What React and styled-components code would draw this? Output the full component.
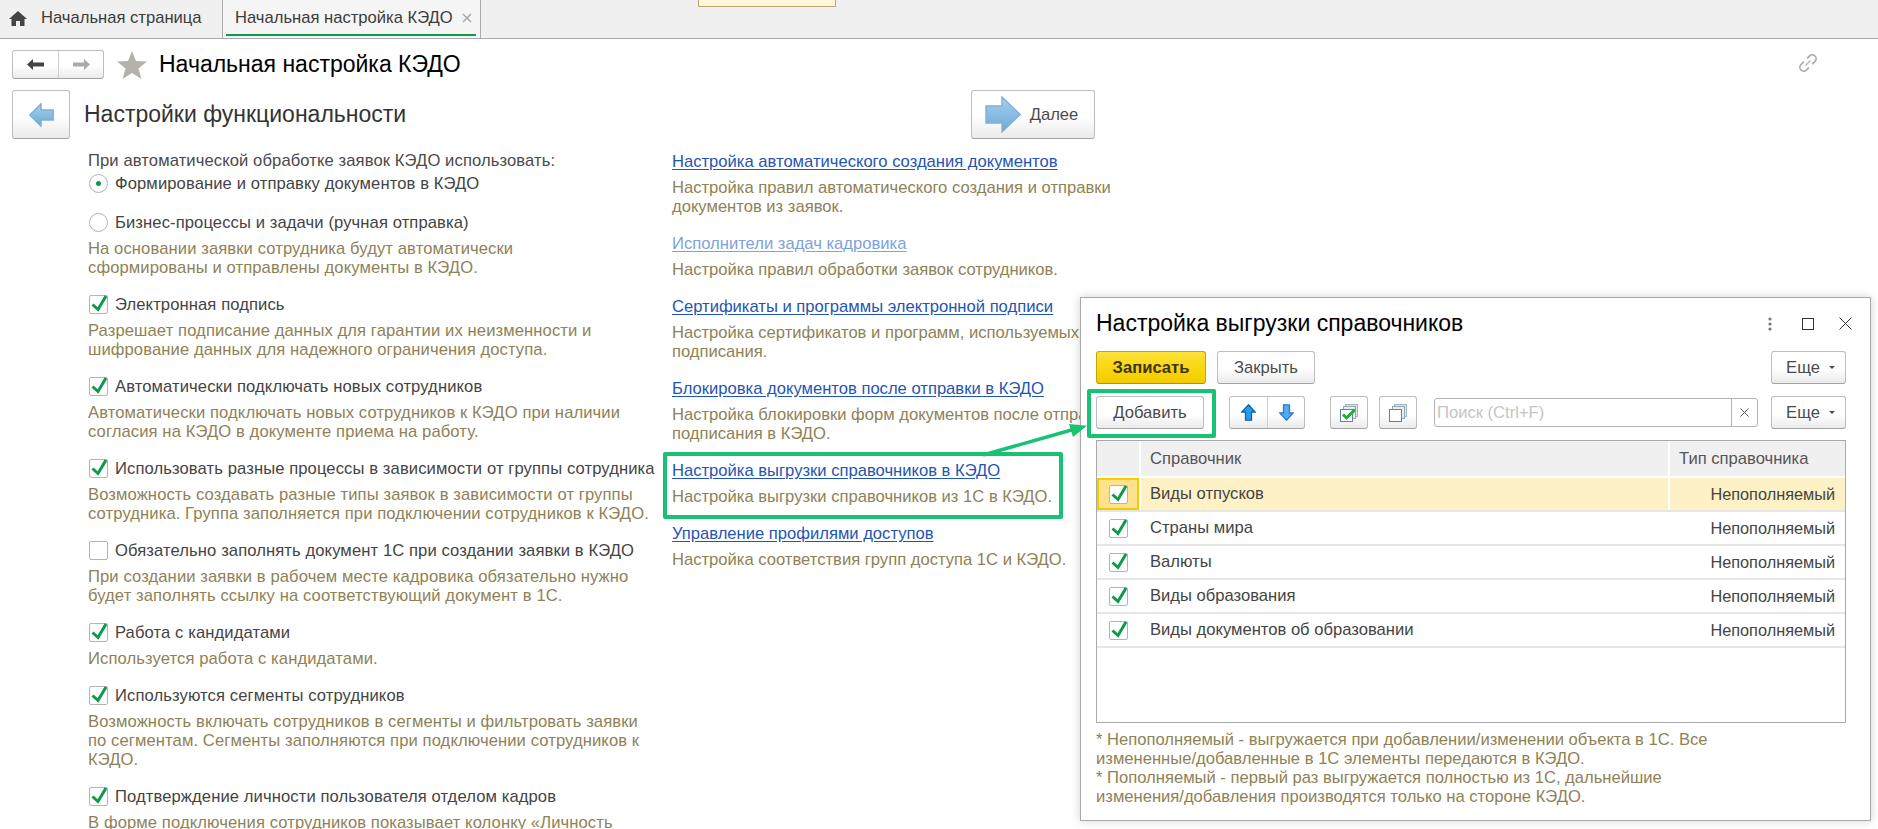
import React from 'react'
import styled, {createGlobalStyle} from 'styled-components'

const GlobalStyle = createGlobalStyle`
  html, body {
    margin: 0;
    padding: 0;
    height: 100%;
    background: #fff;
    overflow: hidden;
  }
  body {
    font-family: 'Liberation Sans', Arial, sans-serif;
    font-size: 16.6px;
    color: #4a4a4a;
  }
`

const Page = styled.div`
  position: relative;
  width: 1878px;
  height: 829px;
  overflow: hidden;
`

const TabBar = styled.div`
  position: relative;
  display: flex;
  height: 38px;
  background: #f0f0f0;
  border-bottom: 1px solid #ababab;
`

const Tab = styled.div`
  display: flex;
  align-items: center;
  box-sizing: border-box;
  height: 38px;
  padding: 0 0 2px ${p => (p.$active ? '12px' : '9px')};
  width: ${p => (p.$active ? '258px' : '223px')};
  gap: ${p => (p.$active ? '9px' : '14px')};
  border-right: 1px solid #ababab;
  background: ${p => (p.$active ? '#f5f5f5' : 'transparent')};
  color: #3c3c3c;
  white-space: nowrap;
`

const TabLine = styled.div`
  position: absolute;
  left: 226px;
  top: 34px;
  width: 250px;
  height: 2px;
  background: #12984a;
`

const Hint = styled.div`
  position: absolute;
  left: 698px;
  top: -1px;
  box-sizing: border-box;
  width: 138px;
  height: 8px;
  background: #fff8d8;
  border: 1px solid #bba970;
`

const TitleRow = styled.div`
  display: flex;
  align-items: center;
  height: 29px;
  padding: 11px 12px 0;
`

const Button = styled.div`
  display: flex;
  align-items: center;
  justify-content: center;
  flex: none;
  box-sizing: border-box;
  width: ${p => (p.$w ? `${p.$w}px` : 'auto')};
  height: ${p => p.$h || 33}px;
  margin-left: ${p => p.$ml || 0}px;
  background: ${p => (p.$primary
    ? 'linear-gradient(#fde23a, #f7d40a 60%, #f2cc00)'
    : 'linear-gradient(#fff 55%, #eaeaea)')};
  border: 1px solid ${p => (p.$primary ? '#c7a400' : '#bdbdbd')};
  border-bottom-color: ${p => (p.$primary ? '#b39300' : '#a3a3a3')};
  border-radius: 3px;
  color: ${p => (p.$primary ? '#3f3414' : '#4a4a4a')};
  font-weight: ${p => (p.$primary ? 'bold' : 'normal')};
  white-space: nowrap;
`

const NextButton = styled(Button)`
  gap: 9px;
  padding-right: 3px;
`

const NavGroup = styled(Button)`
  justify-content: flex-start;
`

const NavPart = styled.div`
  display: flex;
  align-items: center;
  justify-content: center;
  width: ${p => p.$w}px;
  height: 100%;
  & + & {
    border-left: 1px solid #d0d0d0;
  }
`

const PageTitle = styled.h1`
  margin: 0 0 0 12px;
  font-size: 23px;
  font-weight: normal;
  color: #000;
`

const StarIcon = styled.svg`
  flex: none;
  margin-left: 13px;
`

const LinkIcon = styled.svg`
  position: absolute;
  left: 1798px;
  top: 53px;
`

const StepRow = styled.div`
  display: flex;
  align-items: center;
  width: 1083px;
  margin-top: 11px;
  padding: 0 12px;
`

const StepTitle = styled.h2`
  flex: 1;
  margin: 0 0 0 14px;
  font-size: 23px;
  font-weight: normal;
  color: #333;
`

const Columns = styled.div`
  display: flex;
  padding: 12px 0 0 88px;
`

const LeftColumn = styled.div`
  display: flex;
  flex-direction: column;
  width: 584px;
  letter-spacing: 0.1px;
`

const RightColumn = styled.div`
  display: flex;
  flex-direction: column;
  padding-top: 1px;
`

const Caption = styled.div`
  height: 19px;
  line-height: 19px;
  margin-bottom: 4px;
  white-space: nowrap;
`

const Item = styled.div`
  margin-bottom: ${p => p.$gap ?? 18}px;
`

const Option = styled.div`
  display: flex;
  align-items: center;
  height: 19px;
  line-height: 19px;
  padding-left: 1px;
  gap: 7px;
  color: #444;
  white-space: nowrap;
`

const Radio = styled.span`
  position: relative;
  flex: none;
  box-sizing: border-box;
  width: 19px;
  height: 19px;
  border: 1px solid #b4b4b4;
  border-radius: 50%;
  background: #fff;
  ${p => p.$on && `
    &::after {
      content: '';
      position: absolute;
      left: 6px;
      top: 6px;
      width: 5px;
      height: 5px;
      border-radius: 50%;
      background: #0f9a4b;
    }
  `}
`

const CheckBox = styled.span`
  position: relative;
  flex: none;
  display: block;
  box-sizing: border-box;
  width: 19px;
  height: 19px;
  border: 1px solid #b4b4b4;
  border-radius: 2px;
  background: #fff;
`

const CheckMark = styled.svg`
  position: absolute;
  left: -1px;
  top: -5px;
`

const Hintline = styled.div`
  margin-top: 7px;
  line-height: 19px;
  color: #8e8256;
  white-space: nowrap;
`

const SettingLink = styled.a`
  display: block;
  height: 19px;
  line-height: 19px;
  color: ${p => (p.$muted ? '#7ea3dc' : '#1f55b4')};
  text-decoration: underline;
  text-underline-offset: 2px;
  white-space: nowrap;
`

const GreenBox = styled.div`
  position: absolute;
  box-sizing: border-box;
  left: ${p => p.$x}px;
  top: ${p => p.$y}px;
  width: ${p => p.$w}px;
  height: ${p => p.$h}px;
  border: 4px solid #19c172;
  border-radius: 2px;
  z-index: 3;
`

const Pointer = styled.svg`
  position: absolute;
  left: 975px;
  top: 415px;
  z-index: 4;
`

const Modal = styled.div`
  position: absolute;
  left: 1080px;
  top: 297px;
  box-sizing: border-box;
  width: 791px;
  height: 524px;
  padding: 0 24px 0 15px;
  background: #fff;
  border: 1px solid #a8a8a8;
  box-shadow: 0 0 9px rgba(0, 0, 0, 0.18);
  z-index: 2;
`

const ModalHead = styled.div`
  display: flex;
  align-items: center;
  height: 51px;
  margin-right: -24px;
  padding-right: 18px;
`

const ModalTitle = styled.div`
  flex: 1;
  font-size: 23px;
  color: #000;
`

const WindowIcons = styled.div`
  display: flex;
  align-items: center;
  gap: 25px;
`

const MenuDots = styled.svg`
  margin-right: 5px;
`

const ToolRow = styled.div`
  display: flex;
  align-items: center;
  height: 33px;
  margin-top: ${p => p.$top || 0}px;
`

const Spacer = styled.div`
  flex: 1;
`

const MoreCaret = styled.span`
  margin-left: 9px;
  width: 0;
  height: 0;
  border-left: 3px solid transparent;
  border-right: 3px solid transparent;
  border-top: 3px solid #4a4a4a;
`

const MoreButton = styled(Button)`
  width: 75px;
  padding-left: 4px;
`

const SearchBox = styled.div`
  display: flex;
  align-items: stretch;
  box-sizing: border-box;
  width: 326px;
  height: 29px;
  margin: 0 13px 0 17px;
  border: 1px solid #b4b4b4;
  border-radius: 3px;
`

const SearchText = styled.div`
  flex: 1;
  padding-left: 2px;
  line-height: 27px;
  color: #c4c4c4;
`

const SearchClear = styled.div`
  display: flex;
  align-items: center;
  justify-content: center;
  width: 25px;
  border-left: 1px solid #b4b4b4;
`

const Table = styled.div`
  display: flex;
  flex-direction: column;
  box-sizing: border-box;
  height: 283px;
  margin-top: 11px;
  border: 1px solid #a9a9a9;
`

const Row = styled.div`
  display: grid;
  grid-template-columns: 42px 1fr 177px;
  height: ${p => (p.$head ? '35px' : '32px')};
  background: ${p => (p.$head ? '#f0f0f0' : p.$current ? '#fdf1c5' : '#fff')};
  border-bottom: 2px solid ${p => (p.$head ? '#fff' : '#e6e6e6')};
`

const Cell = styled.div`
  display: flex;
  align-items: center;
  padding-left: 9px;
  color: ${p => (p.$head ? '#555' : '#444')};
  white-space: nowrap;
  border-left: 2px solid ${p => (p.$split ? '#fff' : 'transparent')};
  ${p => p.$right && 'justify-content: flex-end; padding-right: 10px; font-size: 16.3px;'}
`

const CheckCell = styled.div`
  display: flex;
  align-items: center;
  justify-content: center;
  box-sizing: border-box;
  ${p => p.$focus && `
    background: #ffe38c;
    border: 2px solid #f4cd00;
  `}
`

const Notes = styled.div`
  margin-top: 7px;
  line-height: 19px;
  color: #8e8256;
  white-space: nowrap;
`

const Check = () => (
  <CheckMark width='21' height='24' viewBox='0 0 21 24'>
    <path d='M3.5 13.5 L9 18.5 L17 5' fill='none' stroke='#0f9a4b' strokeWidth='3' />
  </CheckMark>
)

const Arrow = ({up}) => (
  <svg width='15' height='17' viewBox='0 0 15 17'>
    <path
      d={up ? 'M7.5 .8 L14.2 8 H10.5 V16.2 H4.5 V8 H.8 Z' : 'M4.5 .8 H10.5 V9 H14.2 L7.5 16.2 L.8 9 H4.5 Z'}
      fill={up ? '#2a9be8' : '#55aaee'}
      stroke={up ? '#0d63a8' : '#2a7cc0'}
      strokeWidth='1.3'
    />
  </svg>
)

const Stack = ({checked}) => (
  <svg width='18' height='18' viewBox='0 0 18 18'>
    <rect x='5.5' y='.5' width='12' height='12' fill='#dfe6ea' stroke='#a5b5c0' />
    <rect x='3.5' y='2.5' width='12' height='12' fill='#e9eef1' stroke='#93a8b5' />
    <rect x='.5' y='5.5' width='12' height='12' fill='#fff' stroke='#5f8296' />
    {checked && <path d='M3 10.5 L6.5 14 L15 5.5' fill='none' stroke='#17b32c' strokeWidth='3' />}
  </svg>
)

const BackArrow = () => (
  <svg width='25' height='24' viewBox='0 0 25 24'>
    <defs>
      <linearGradient id='ba' x1='0' y1='0' x2='0' y2='1'>
        <stop offset='0' stopColor='#a9d0ec' />
        <stop offset='1' stopColor='#6aa9d8' />
      </linearGradient>
    </defs>
    <path d='M.8 12 L12 .8 V7 H24.2 V17 H12 V23.2 Z' fill='url(#ba)' stroke='#7fb0d2' strokeWidth='1.4' />
  </svg>
)

const NextArrow = () => (
  <svg width='36' height='37' viewBox='0 0 36 37'>
    <defs>
      <linearGradient id='fa' x1='0' y1='0' x2='0' y2='1'>
        <stop offset='0' stopColor='#a9d0ec' />
        <stop offset='1' stopColor='#6aa9d8' />
      </linearGradient>
    </defs>
    <path d='M35.2 18.5 L17 1 V10 H1 V27 H17 V36 Z' fill='url(#fa)' stroke='#7fb0d2' strokeWidth='1.4' />
  </svg>
)

const LEFT_ITEMS = [
  {label: 'Электронная подпись', checked: true, lines: [
    'Разрешает подписание данных для гарантии их неизменности и',
    'шифрование данных для надежного ограничения доступа.',
  ]},
  {label: 'Автоматически подключать новых сотрудников', checked: true, lines: [
    'Автоматически подключать новых сотрудников к КЭДО при наличии',
    'согласия на КЭДО в документе приема на работу.',
  ]},
  {label: 'Использовать разные процессы в зависимости от группы сотрудника', checked: true, lines: [
    'Возможность создавать разные типы заявок в зависимости от группы',
    'сотрудника. Группа заполняется при подключении сотрудников к КЭДО.',
  ]},
  {label: 'Обязательно заполнять документ 1С при создании заявки в КЭДО', checked: false, lines: [
    'При создании заявки в рабочем месте кадровика обязательно нужно',
    'будет заполнять ссылку на соответствующий документ в 1С.',
  ]},
  {label: 'Работа с кандидатами', checked: true, lines: [
    'Используется работа с кандидатами.',
  ]},
  {label: 'Используются сегменты сотрудников', checked: true, lines: [
    'Возможность включать сотрудников в сегменты и фильтровать заявки',
    'по сегментам. Сегменты заполняются при подключении сотрудников к',
    'КЭДО.',
  ]},
  {label: 'Подтверждение личности пользователя отделом кадров', checked: true, lines: [
    'В форме подключения сотрудников показывает колонку «Личность',
  ]},
]

const RIGHT_ITEMS = [
  {title: 'Настройка автоматического создания документов', lines: [
    'Настройка правил автоматического создания и отправки',
    'документов из заявок.',
  ]},
  {title: 'Исполнители задач кадровика', muted: true, lines: [
    'Настройка правил обработки заявок сотрудников.',
  ]},
  {title: 'Сертификаты и программы электронной подписи', lines: [
    'Настройка сертификатов и программ, используемых для',
    'подписания.',
  ]},
  {title: 'Блокировка документов после отправки в КЭДО', lines: [
    'Настройка блокировки форм документов после отправки и',
    'подписания в КЭДО.',
  ]},
  {title: 'Настройка выгрузки справочников в КЭДО', lines: [
    'Настройка выгрузки справочников из 1С в КЭДО.',
  ]},
  {title: 'Управление профилями доступов', lines: [
    'Настройка соответствия групп доступа 1С и КЭДО.',
  ]},
]

const CATALOGS = [
  'Виды отпусков',
  'Страны мира',
  'Валюты',
  'Виды образования',
  'Виды документов об образовании',
]

const Lines = ({lines}) => (
  <Hintline>
    {lines.map(line => <div key={line}>{line}</div>)}
  </Hintline>
)

export default function App() {
  return (
    <Page>
      <GlobalStyle />

      <TabBar>
        <Tab>
          <svg width='18' height='15' viewBox='0 0 18 15'>
            <path d='M9 0 L18 8 H15.5 V15 H11 V10 H7 V15 H2.5 V8 H0 Z' fill='#444' />
          </svg>
          Начальная страница
        </Tab>
        <Tab $active>
          Начальная настройка КЭДО
          <svg width='10' height='10' viewBox='0 0 10 10'>
            <path d='M1 1 L9 9 M9 1 L1 9' stroke='#aaa' strokeWidth='1.6' />
          </svg>
        </Tab>
        <TabLine />
      </TabBar>
      <Hint />

      <TitleRow>
        <NavGroup $h={29} $w={92}>
          <NavPart $w={46}>
            <svg width='17' height='11' viewBox='0 0 17 11'>
              <path d='M0 5.5 L6 0 V3.5 H17 V7.5 H6 V11 Z' fill='#444' />
            </svg>
          </NavPart>
          <NavPart $w={44}>
            <svg width='17' height='11' viewBox='0 0 17 11'>
              <path d='M17 5.5 L11 0 V3.5 H0 V7.5 H11 V11 Z' fill='#aaa' />
            </svg>
          </NavPart>
        </NavGroup>
        <StarIcon width='30' height='28' viewBox='0 0 30 28'>
          <path d='M15 0 L19 10 L30 10.5 L21.5 17.5 L24.5 28 L15 22 L5.5 28 L8.5 17.5 L0 10.5 L11 10 Z' fill='#b5b2ab' />
        </StarIcon>
        <PageTitle>Начальная настройка КЭДО</PageTitle>
      </TitleRow>
      <LinkIcon width='20' height='20' viewBox='0 0 24 24' fill='none' stroke='#aaa' strokeWidth='2'>
        <path d='M11 6.5 L14 3.5 A4.6 4.6 0 0 1 20.5 10 L17 13.5' />
        <path d='M13 17.5 L10 20.5 A4.6 4.6 0 0 1 3.5 14 L7 10.5' />
        <path d='M9 15 L15 9' stroke='#a8c4bc' />
      </LinkIcon>

      <StepRow>
        <Button $h={49} $w={58}>
          <BackArrow />
        </Button>
        <StepTitle>Настройки функциональности</StepTitle>
        <NextButton $h={49} $w={124}>
          <NextArrow />
          Далее
        </NextButton>
      </StepRow>

      <Columns>
        <LeftColumn>
          <Caption>При автоматической обработке заявок КЭДО использовать:</Caption>
          <Item $gap={20}>
            <Option><Radio $on />Формирование и отправку документов в КЭДО</Option>
          </Item>
          <Item>
            <Option><Radio />Бизнес-процессы и задачи (ручная отправка)</Option>
            <Lines lines={[
              'На основании заявки сотрудника будут автоматически',
              'сформированы и отправлены документы в КЭДО.',
            ]} />
          </Item>
          {LEFT_ITEMS.map(item => (
            <Item key={item.label}>
              <Option>
                <CheckBox>{item.checked && <Check />}</CheckBox>
                {item.label}
              </Option>
              <Lines lines={item.lines} />
            </Item>
          ))}
        </LeftColumn>

        <RightColumn>
          {RIGHT_ITEMS.map(item => (
            <Item key={item.title}>
              <SettingLink $muted={item.muted}>{item.title}</SettingLink>
              <Lines lines={item.lines} />
            </Item>
          ))}
        </RightColumn>
      </Columns>

      <GreenBox $x={663} $y={452} $w={400} $h={67} />
      <GreenBox $x={1087} $y={389} $w={129} $h={49} />
      <Pointer width='115' height='45' viewBox='0 0 115 45'>
        <path d='M8 40 L100 14' stroke='#19c172' strokeWidth='3.4' />
        <path d='M112 10.7 L94 9 L98 22 Z' fill='#19c172' />
      </Pointer>

      <Modal>
        <ModalHead>
          <ModalTitle>Настройка выгрузки справочников</ModalTitle>
          <WindowIcons>
            <MenuDots width='4' height='14' viewBox='0 0 4 14'>
              <circle cx='2' cy='2' r='1.6' fill='#777' />
              <circle cx='2' cy='7' r='1.6' fill='#777' />
              <circle cx='2' cy='12' r='1.6' fill='#777' />
            </MenuDots>
            <svg width='12' height='12' viewBox='0 0 12 12'>
              <rect x='0.5' y='0.5' width='11' height='11' fill='none' stroke='#333' />
            </svg>
            <svg width='13' height='13' viewBox='0 0 13 13'>
              <path d='M0.5 0.5 L12.5 12.5 M12.5 0.5 L0.5 12.5' stroke='#333' />
            </svg>
          </WindowIcons>
        </ModalHead>

        <ToolRow $top={2}>
          <Button $primary $w={110}>Записать</Button>
          <Button $w={98} $ml={11}>Закрыть</Button>
          <Spacer />
          <MoreButton>Еще<MoreCaret /></MoreButton>
        </ToolRow>

        <ToolRow $top={12}>
          <Button $w={108}>Добавить</Button>
          <NavGroup $w={76} $ml={25}>
            <NavPart $w={38}><Arrow up /></NavPart>
            <NavPart $w={36}><Arrow /></NavPart>
          </NavGroup>
          <Button $w={38} $ml={25}><Stack checked /></Button>
          <Button $w={38} $ml={11}><Stack /></Button>
          <SearchBox>
            <SearchText>Поиск (Ctrl+F)</SearchText>
            <SearchClear>
              <svg width='9' height='9' viewBox='0 0 9 9'>
                <path d='M0.5 0.5 L8.5 8.5 M8.5 0.5 L0.5 8.5' stroke='#555' />
              </svg>
            </SearchClear>
          </SearchBox>
          <MoreButton>Еще<MoreCaret /></MoreButton>
        </ToolRow>

        <Table>
          <Row $head>
            <CheckCell />
            <Cell $head $split>Справочник</Cell>
            <Cell $head $split>Тип справочника</Cell>
          </Row>
          {CATALOGS.map((name, i) => (
            <Row key={name} $current={i === 0}>
              <CheckCell $focus={i === 0}>
                <CheckBox><Check /></CheckBox>
              </CheckCell>
              <Cell $split={i === 0}>{name}</Cell>
              <Cell $right $split={i === 0}>Непополняемый</Cell>
            </Row>
          ))}
        </Table>

        <Notes>
          <div>* Непополняемый - выгружается при добавлении/изменении объекта в 1С. Все</div>
          <div>измененные/добавленные в 1С элементы передаются в КЭДО.</div>
          <div>* Пополняемый - первый раз выгружается полностью из 1С, дальнейшие</div>
          <div>изменения/добавления производятся только на стороне КЭДО.</div>
        </Notes>
      </Modal>
    </Page>
  )
}
